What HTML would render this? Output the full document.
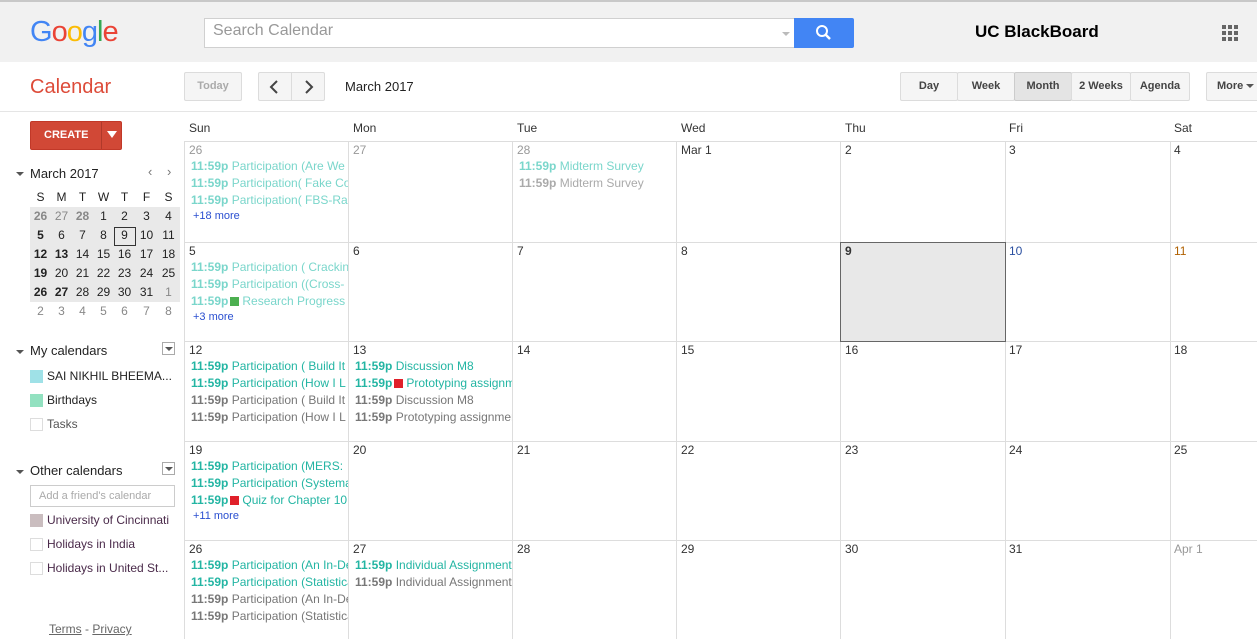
<!DOCTYPE html>
<html><head><meta charset="utf-8"><style>
*{margin:0;padding:0;box-sizing:border-box}
body{width:1257px;height:639px;overflow:hidden;background:#fff;font-family:"Liberation Sans",Arial,sans-serif;font-size:12px;color:#222;position:relative}
.a{position:absolute;white-space:nowrap}
.top{position:absolute;left:0;top:0;width:1257px;height:62px;background:#f1f1f1;border-top:2px solid #c8c8c8}
.btn{position:absolute;border:1px solid #dcdcdc;background:#f5f5f5;border-radius:2px;font-weight:bold;font-size:11px;color:#444;text-align:center;line-height:27px;height:29px}
.vl{position:absolute;width:1px;background:#ddd;top:141px;height:498px}
.hl{position:absolute;height:1px;background:#ddd;left:185px;width:1072px}
.d{position:absolute;font-size:12px;color:#333}
.e{position:absolute;font-size:12px;white-space:nowrap;overflow:hidden;width:157px;line-height:17px}
.e b{font-weight:bold}
.l{color:#7ad6cb}.t{color:#23b5a3}.g{color:#777}
.m{position:absolute;font-size:11px;color:#2a4fd0}
.sq{display:inline-block;width:9px;height:9px;margin:0 3px 0 2px;vertical-align:-1px}
.mc{position:absolute;font-size:12px;text-align:center;width:21px}
.cb{position:absolute;width:13px;height:13px;border:1px solid #ddd}
.tri{position:absolute;width:0;height:0;border-left:4px solid transparent;border-right:4px solid transparent;border-top:4px solid #555}
</style></head><body>
<div class="top"></div>
<div class="a" style="left:30px;top:16px;font-size:29px;letter-spacing:-1px"><span style="color:#4285f4">G</span><span style="color:#ea4335">o</span><span style="color:#fbbc05">o</span><span style="color:#4285f4">g</span><span style="color:#34a853">l</span><span style="color:#ea4335">e</span></div>
<div class="a" style="left:204px;top:18px;width:591px;height:30px;background:#fff;border:1px solid #d0d0d0"></div>
<div class="a" style="left:213px;top:22px;font-size:16px;color:#999">Search Calendar</div>
<div class="tri" style="left:782px;top:32px;border-top-color:#bbb"></div>
<div class="a" style="left:794px;top:18px;width:60px;height:30px;background:#4285f4;border-radius:0 2px 2px 0"><svg width="60" height="30"><circle cx="28" cy="13" r="5" fill="none" stroke="#fff" stroke-width="2"/><line x1="31.5" y1="16.5" x2="36" y2="21" stroke="#fff" stroke-width="2.5"/></svg></div>
<div class="a" style="left:975px;top:22px;font-size:17px;font-weight:bold;color:#000">UC BlackBoard</div>
<svg class="a" style="left:1222px;top:25px" width="18" height="18"><g fill="#666"><rect x="0" y="0" width="4" height="4"/><rect x="6" y="0" width="4" height="4"/><rect x="12" y="0" width="4" height="4"/><rect x="0" y="6" width="4" height="4"/><rect x="6" y="6" width="4" height="4"/><rect x="12" y="6" width="4" height="4"/><rect x="0" y="12" width="4" height="4"/><rect x="6" y="12" width="4" height="4"/><rect x="12" y="12" width="4" height="4"/></g></svg>

<div class="a" style="left:30px;top:76px;font-size:20px;color:#dd4b39">Calendar</div>
<div class="btn" style="left:184px;top:72px;width:58px;color:#aaa">Today</div>
<div class="btn" style="left:258px;top:72px;width:67px"></div>
<div class="a" style="left:291px;top:73px;width:1px;height:28px;background:#dcdcdc"></div>
<svg class="a" style="left:258px;top:72px" width="67" height="29"><path d="M19 9 L13 15 L19 21" stroke="#444" stroke-width="2" fill="none"/><path d="M48 9 L54 15 L48 21" stroke="#444" stroke-width="2" fill="none"/></svg>
<div class="a" style="left:345px;top:79px;font-size:13px;color:#222">March 2017</div>
<div class="btn" style="left:900px;top:72px;width:58px">Day</div>
<div class="btn" style="left:957px;top:72px;width:58px">Week</div>
<div class="btn" style="left:1014px;top:72px;width:58px;background:#e4e4e4;border-color:#ccc">Month</div>
<div class="btn" style="left:1071px;top:72px;width:60px">2 Weeks</div>
<div class="btn" style="left:1130px;top:72px;width:60px">Agenda</div>
<div class="btn" style="left:1206px;top:72px;width:60px;text-align:left;padding-left:10px">More</div>
<div class="tri" style="left:1246px;top:84px"></div>
<div class="a" style="left:0;top:111px;width:1257px;height:1px;background:#e5e5e5"></div>

<div class="a" style="left:30px;top:121px;width:92px;height:29px;background:#d14836;border-radius:2px;border:1px solid #c13828"></div>
<div class="a" style="left:44px;top:129px;font-size:11px;font-weight:bold;color:#fff">CREATE</div>
<div class="a" style="left:101px;top:122px;width:1px;height:27px;background:#b0392a"></div>
<div class="tri" style="left:107px;top:131px;border-left-width:5px;border-right-width:5px;border-top:7px solid #fff"></div>

<div class="tri" style="left:16px;top:172px"></div>
<div class="a" style="left:30px;top:166px;font-size:13px;color:#222">March 2017</div>
<div class="a" style="left:148px;top:164px;font-size:13px;color:#777">‹</div>
<div class="a" style="left:167px;top:164px;font-size:13px;color:#777">›</div>
<div class="a" style="left:30px;top:207px;width:150px;height:95px;background:#e9e9e9"></div>
<div class="a" style="left:114px;top:227px;width:22px;height:19px;border:1px solid #333"></div>
<div class="mc" style="left:30px;top:190px">S</div><div class="mc" style="left:51px;top:190px">M</div><div class="mc" style="left:72px;top:190px">T</div><div class="mc" style="left:93px;top:190px">W</div><div class="mc" style="left:114px;top:190px">T</div><div class="mc" style="left:136px;top:190px">F</div><div class="mc" style="left:158px;top:190px">S</div>
<div class="mc" style="left:30px;top:209px;color:#888;font-weight:bold">26</div><div class="mc" style="left:51px;top:209px;color:#888">27</div><div class="mc" style="left:72px;top:209px;color:#888;font-weight:bold">28</div><div class="mc" style="left:93px;top:209px">1</div><div class="mc" style="left:114px;top:209px">2</div><div class="mc" style="left:136px;top:209px">3</div><div class="mc" style="left:158px;top:209px">4</div>
<div class="mc" style="left:30px;top:228px;font-weight:bold">5</div><div class="mc" style="left:51px;top:228px">6</div><div class="mc" style="left:72px;top:228px">7</div><div class="mc" style="left:93px;top:228px">8</div><div class="mc" style="left:114px;top:228px">9</div><div class="mc" style="left:136px;top:228px">10</div><div class="mc" style="left:158px;top:228px">11</div>
<div class="mc" style="left:30px;top:247px;font-weight:bold">12</div><div class="mc" style="left:51px;top:247px;font-weight:bold">13</div><div class="mc" style="left:72px;top:247px">14</div><div class="mc" style="left:93px;top:247px">15</div><div class="mc" style="left:114px;top:247px">16</div><div class="mc" style="left:136px;top:247px">17</div><div class="mc" style="left:158px;top:247px">18</div>
<div class="mc" style="left:30px;top:266px;font-weight:bold">19</div><div class="mc" style="left:51px;top:266px">20</div><div class="mc" style="left:72px;top:266px">21</div><div class="mc" style="left:93px;top:266px">22</div><div class="mc" style="left:114px;top:266px">23</div><div class="mc" style="left:136px;top:266px">24</div><div class="mc" style="left:158px;top:266px">25</div>
<div class="mc" style="left:30px;top:285px;font-weight:bold">26</div><div class="mc" style="left:51px;top:285px;font-weight:bold">27</div><div class="mc" style="left:72px;top:285px">28</div><div class="mc" style="left:93px;top:285px">29</div><div class="mc" style="left:114px;top:285px">30</div><div class="mc" style="left:136px;top:285px">31</div><div class="mc" style="left:158px;top:285px;color:#888">1</div>
<div class="mc" style="left:30px;top:304px;color:#888">2</div><div class="mc" style="left:51px;top:304px;color:#888">3</div><div class="mc" style="left:72px;top:304px;color:#888">4</div><div class="mc" style="left:93px;top:304px;color:#888">5</div><div class="mc" style="left:114px;top:304px;color:#888">6</div><div class="mc" style="left:136px;top:304px;color:#888">7</div><div class="mc" style="left:158px;top:304px;color:#888">8</div>

<div class="tri" style="left:16px;top:350px"></div>
<div class="a" style="left:30px;top:343px;font-size:13px">My calendars</div>
<div class="a" style="left:162px;top:342px;width:13px;height:13px;border:1px solid #aaa"></div><div class="tri" style="left:165px;top:347px"></div>
<div class="cb" style="left:30px;top:370px;background:#9fe1e7;border-color:#9fe1e7"></div><div class="a" style="left:47px;top:369px;font-size:12px">SAI NIKHIL BHEEMA...</div>
<div class="cb" style="left:30px;top:394px;background:#92e1c0;border-color:#92e1c0"></div><div class="a" style="left:47px;top:393px;font-size:12px">Birthdays</div>
<div class="cb" style="left:30px;top:418px"></div><div class="a" style="left:47px;top:417px;font-size:12px;color:#555">Tasks</div>
<div class="tri" style="left:16px;top:470px"></div>
<div class="a" style="left:30px;top:463px;font-size:13px">Other calendars</div>
<div class="a" style="left:162px;top:462px;width:13px;height:13px;border:1px solid #aaa"></div><div class="tri" style="left:165px;top:467px"></div>
<div class="a" style="left:30px;top:485px;width:145px;height:22px;border:1px solid #ccc"></div><div class="a" style="left:39px;top:490px;font-size:11px;color:#aaa">Add a friend's calendar</div>
<div class="cb" style="left:30px;top:514px;background:#cabdbf;border-color:#cabdbf"></div><div class="a" style="left:47px;top:513px;font-size:12px;color:#4a2a4a">University of Cincinnati</div>
<div class="cb" style="left:30px;top:538px"></div><div class="a" style="left:47px;top:537px;font-size:12px;color:#4a2a4a">Holidays in India</div>
<div class="cb" style="left:30px;top:562px"></div><div class="a" style="left:47px;top:561px;font-size:12px;color:#4a2a4a">Holidays in United St...</div>
<div class="a" style="left:49px;top:622px;font-size:12px;color:#666"><u>Terms</u> - <u>Privacy</u></div>

<div class="a" style="left:189px;top:121px;font-size:12px;color:#333">Sun</div>
<div class="a" style="left:353px;top:121px;color:#333">Mon</div>
<div class="a" style="left:517px;top:121px;color:#333">Tue</div>
<div class="a" style="left:681px;top:121px;color:#333">Wed</div>
<div class="a" style="left:845px;top:121px;color:#333">Thu</div>
<div class="a" style="left:1009px;top:121px;color:#333">Fri</div>
<div class="a" style="left:1174px;top:121px;color:#333">Sat</div>

<div class="vl" style="left:184px"></div><div class="vl" style="left:348px"></div><div class="vl" style="left:512px"></div><div class="vl" style="left:676px"></div><div class="vl" style="left:840px"></div><div class="vl" style="left:1005px"></div><div class="vl" style="left:1170px"></div>
<div class="hl" style="top:141px"></div><div class="hl" style="top:242px"></div><div class="hl" style="top:341px"></div><div class="hl" style="top:441px"></div><div class="hl" style="top:540px"></div>
<div class="a" style="left:840px;top:242px;width:166px;height:100px;background:#e8e8e8;border:1px solid #666"></div>

<div class="d" style="left:189px;top:143px;color:#999">26</div><div class="d" style="left:353px;top:143px;color:#999">27</div><div class="d" style="left:517px;top:143px;color:#999">28</div><div class="d" style="left:681px;top:143px">Mar 1</div><div class="d" style="left:845px;top:143px">2</div><div class="d" style="left:1009px;top:143px">3</div><div class="d" style="left:1174px;top:143px">4</div>
<div class="e l" style="left:191px;top:158px"><b>11:59p</b> Participation (Are We Ready</div>
<div class="e l" style="left:191px;top:175px"><b>11:59p</b> Participation( Fake Collateral</div>
<div class="e l" style="left:191px;top:192px"><b>11:59p</b> Participation( FBS-Rank</div>
<div class="m" style="left:193px;top:210px">+18 more</div>
<div class="e l" style="left:519px;top:158px"><b>11:59p</b> Midterm Survey</div>
<div class="e g" style="left:519px;top:175px;color:#aaa"><b>11:59p</b> Midterm Survey</div>

<div class="d" style="left:189px;top:244px">5</div><div class="d" style="left:353px;top:244px">6</div><div class="d" style="left:517px;top:244px">7</div><div class="d" style="left:681px;top:244px">8</div><div class="d" style="left:845px;top:244px;font-weight:bold">9</div><div class="d" style="left:1009px;top:244px;color:#2a4fa0">10</div><div class="d" style="left:1174px;top:244px;color:#b06000">11</div>
<div class="e l" style="left:191px;top:259px"><b>11:59p</b> Participation ( Cracking</div>
<div class="e l" style="left:191px;top:276px"><b>11:59p</b> Participation ((Cross-</div>
<div class="e l" style="left:191px;top:293px"><b>11:59p</b><span class="sq" style="background:#4caf50"></span>Research Progress</div>
<div class="m" style="left:193px;top:311px">+3 more</div>

<div class="d" style="left:189px;top:343px">12</div><div class="d" style="left:353px;top:343px">13</div><div class="d" style="left:517px;top:343px">14</div><div class="d" style="left:681px;top:343px">15</div><div class="d" style="left:845px;top:343px">16</div><div class="d" style="left:1009px;top:343px">17</div><div class="d" style="left:1174px;top:343px">18</div>
<div class="e t" style="left:191px;top:358px"><b>11:59p</b> Participation ( Build It</div>
<div class="e t" style="left:191px;top:375px"><b>11:59p</b> Participation (How I L</div>
<div class="e g" style="left:191px;top:392px"><b>11:59p</b> Participation ( Build It</div>
<div class="e g" style="left:191px;top:409px"><b>11:59p</b> Participation (How I L</div>
<div class="e t" style="left:355px;top:358px"><b>11:59p</b> Discussion M8</div>
<div class="e t" style="left:355px;top:375px"><b>11:59p</b><span class="sq" style="background:#e0202a"></span>Prototyping assignment</div>
<div class="e g" style="left:355px;top:392px"><b>11:59p</b> Discussion M8</div>
<div class="e g" style="left:355px;top:409px"><b>11:59p</b> Prototyping assignment</div>

<div class="d" style="left:189px;top:443px">19</div><div class="d" style="left:353px;top:443px">20</div><div class="d" style="left:517px;top:443px">21</div><div class="d" style="left:681px;top:443px">22</div><div class="d" style="left:845px;top:443px">23</div><div class="d" style="left:1009px;top:443px">24</div><div class="d" style="left:1174px;top:443px">25</div>
<div class="e t" style="left:191px;top:458px"><b>11:59p</b> Participation (MERS:</div>
<div class="e t" style="left:191px;top:475px"><b>11:59p</b> Participation (Systematic</div>
<div class="e t" style="left:191px;top:492px"><b>11:59p</b><span class="sq" style="background:#e0202a"></span>Quiz for Chapter 10</div>
<div class="m" style="left:193px;top:510px">+11 more</div>

<div class="d" style="left:189px;top:542px">26</div><div class="d" style="left:353px;top:542px">27</div><div class="d" style="left:517px;top:542px">28</div><div class="d" style="left:681px;top:542px">29</div><div class="d" style="left:845px;top:542px">30</div><div class="d" style="left:1009px;top:542px">31</div><div class="d" style="left:1174px;top:542px;color:#999">Apr 1</div>
<div class="e t" style="left:191px;top:557px"><b>11:59p</b> Participation (An In-Depth</div>
<div class="e t" style="left:191px;top:574px"><b>11:59p</b> Participation (Statistical</div>
<div class="e g" style="left:191px;top:591px"><b>11:59p</b> Participation (An In-Depth</div>
<div class="e g" style="left:191px;top:608px"><b>11:59p</b> Participation (Statistical</div>
<div class="e t" style="left:355px;top:557px"><b>11:59p</b> Individual Assignment</div>
<div class="e g" style="left:355px;top:574px"><b>11:59p</b> Individual Assignment</div>
</body></html>
